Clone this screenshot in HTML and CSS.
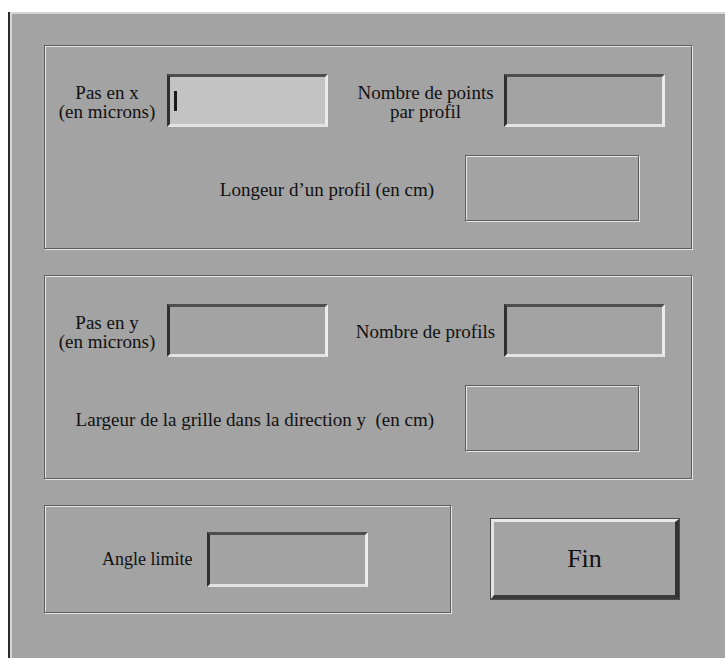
FILE: index.html
```html
<!DOCTYPE html>
<html lang="fr">
<head>
    <meta charset="UTF-8">
    <title>Parametres de la grille</title>
    <link rel="stylesheet" href="styles.css">
</head>
<body>
    <div class="window">
        <div class="group">
            <div class="row-top">
                <div class="label-a">Pas en x<br>(en microns)</div>
                <div class="field focused"><span class="caret"></span></div>
                <div class="label-b">Nombre de points<br>par profil</div>
                <div class="field"></div>
            </div>
            <div class="row-bottom">
                <div class="label">Longeur d&rsquo;un profil (en cm)</div>
                <div class="field-etched"></div>
            </div>
        </div>

        <div class="group">
            <div class="row-top">
                <div class="label-a">Pas en y<br>(en microns)</div>
                <div class="field"></div>
                <div class="label-b">Nombre de profils</div>
                <div class="field"></div>
            </div>
            <div class="row-bottom">
                <div class="label">Largeur de la grille dans la direction y&nbsp; (en cm)</div>
                <div class="field-etched"></div>
            </div>
        </div>

        <div class="row-end">
            <div class="angle-box">
                <div class="label">Angle limite</div>
                <div class="field angle-field"></div>
            </div>
            <div class="btn-fin">Fin</div>
        </div>
    </div>
</body>
</html>
```

FILE: styles.css
```css
body {
    margin: 0;
    background-color: #ffffff;
    font-family: "Liberation Serif", "Times New Roman", serif;
    font-size: 19px;
    color: #111111;
}

.window {
    margin: 12px 0 0 8px;
    height: 646px;
    box-sizing: border-box;
    padding: 33px 0 0 34px;
    background-color: #a3a3a3;
    border-left: 2px solid #2b2b2b;
    box-shadow: inset 2px 2px 0 #d6d6d6;
}

.group {
    width: 648px;
    height: 204px;
    box-sizing: border-box;
    padding-top: 28px;
    margin-bottom: 26px;
    border: 1px solid #5c5c5c;
    box-shadow: inset 1px 1px 0 #e6e6e6, 1px 1px 0 #e6e6e6;
}

.row-top {
    display: flex;
    align-items: center;
    height: 53px;
}

.label-a {
    width: 104px;
    margin-left: 10px;
    text-align: center;
    line-height: 19px;
    padding-top: 2px;
}

.label-b {
    width: 145px;
    margin-left: 25px;
    margin-right: 6px;
    text-align: center;
    line-height: 19px;
    padding-top: 2px;
}

.label-a + .field {
    margin-left: 8px;
}

.field {
    width: 161px;
    height: 53px;
    box-sizing: border-box;
    border-style: solid;
    border-width: 3px;
    border-color: #4e4e4e #ececec #e2e2e2 #303030;
    display: flex;
    align-items: center;
    padding-left: 4px;
}

.field.focused {
    background-color: #c3c3c3;
}

.caret {
    display: block;
    width: 3px;
    height: 20px;
    background-color: #1a1a1a;
}

.row-bottom {
    display: flex;
    justify-content: flex-end;
    align-items: center;
    margin-top: 28px;
    padding-right: 52px;
}

.row-bottom .label {
    margin-right: 31px;
    padding-top: 4px;
}

.field-etched {
    width: 174px;
    height: 66px;
    box-sizing: border-box;
    border: 1px solid #5c5c5c;
    box-shadow: inset 1px 1px 0 #e6e6e6, 1px 1px 0 #e6e6e6;
}

.row-end {
    display: flex;
    align-items: flex-start;
}

.angle-box {
    width: 407px;
    height: 108px;
    box-sizing: border-box;
    display: flex;
    align-items: center;
    padding-left: 57px;
    font-size: 18px;
    border: 1px solid #5c5c5c;
    box-shadow: inset 1px 1px 0 #e6e6e6, 1px 1px 0 #e6e6e6;
}

.angle-field {
    height: 55px;
    margin-left: 15px;
}

.btn-fin {
    width: 188px;
    height: 80px;
    box-sizing: border-box;
    margin: 14px 0 0 40px;
    display: flex;
    align-items: center;
    justify-content: center;
    font-size: 26px;
    border-style: solid;
    border-width: 3px 4px 4px 3px;
    border-color: #e8e8e8 #333333 #3a3a3a #e4e4e4;
    box-shadow: 0 0 0 1px #4a4a4a;
}
```
